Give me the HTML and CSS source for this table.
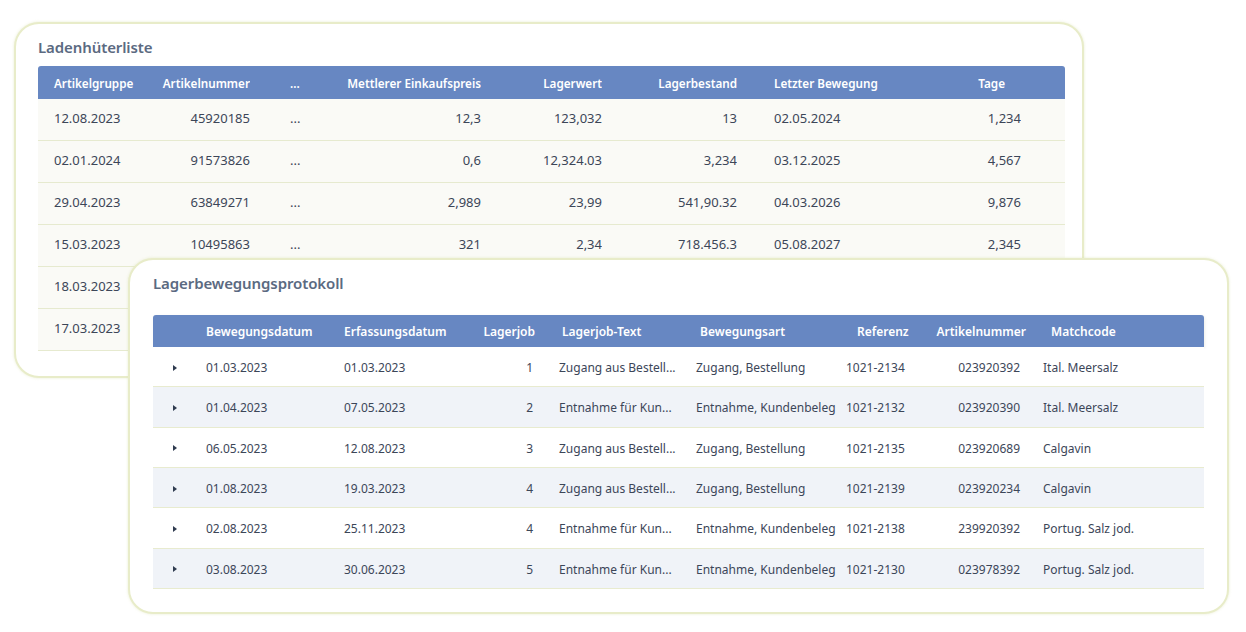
FILE: index.html
```html
<!DOCTYPE html>
<html lang="de">
<head>
<meta charset="utf-8">
<title>Lager</title>
<link rel="stylesheet" href="styles.css">
</head>
<body>
<div class="stage">
  <section class="card card-a">
    <h2 class="title">Ladenhüterliste</h2>
    <div class="tbl tbl-a">
      <div class="row head">
        <div class="c">Artikelgruppe</div>
        <div class="c r">Artikelnummer</div>
        <div class="c dots">...</div>
        <div class="c r">Mettlerer Einkaufspreis</div>
        <div class="c r">Lagerwert</div>
        <div class="c r">Lagerbestand</div>
        <div class="c last">Letzter Bewegung</div>
        <div class="c r tage">Tage</div>
      </div>
      <div class="row">
        <div class="c">12.08.2023</div><div class="c r">45920185</div><div class="c dots">...</div><div class="c r">12,3</div><div class="c r">123,032</div><div class="c r">13</div><div class="c last">02.05.2024</div><div class="c r">1,234</div>
      </div>
      <div class="row">
        <div class="c">02.01.2024</div><div class="c r">91573826</div><div class="c dots">...</div><div class="c r">0,6</div><div class="c r">12,324.03</div><div class="c r">3,234</div><div class="c last">03.12.2025</div><div class="c r">4,567</div>
      </div>
      <div class="row">
        <div class="c">29.04.2023</div><div class="c r">63849271</div><div class="c dots">...</div><div class="c r">2,989</div><div class="c r">23,99</div><div class="c r">541,90.32</div><div class="c last">04.03.2026</div><div class="c r">9,876</div>
      </div>
      <div class="row">
        <div class="c">15.03.2023</div><div class="c r">10495863</div><div class="c dots">...</div><div class="c r">321</div><div class="c r">2,34</div><div class="c r">718.456.3</div><div class="c last">05.08.2027</div><div class="c r">2,345</div>
      </div>
      <div class="row">
        <div class="c">18.03.2023</div><div class="c r"></div><div class="c dots"></div><div class="c r"></div><div class="c r"></div><div class="c r"></div><div class="c last"></div><div class="c r"></div>
      </div>
      <div class="row">
        <div class="c">17.03.2023</div><div class="c r"></div><div class="c dots"></div><div class="c r"></div><div class="c r"></div><div class="c r"></div><div class="c last"></div><div class="c r"></div>
      </div>
    </div>
  </section>

  <section class="card card-b">
    <h2 class="title">Lagerbewegungsprotokoll</h2>
    <div class="tbl tbl-b">
      <div class="row head">
        <div class="c"></div>
        <div class="c">Bewegungsdatum</div>
        <div class="c">Erfassungsdatum</div>
        <div class="c r">Lagerjob</div>
        <div class="c">Lagerjob-Text</div>
        <div class="c">Bewegungsart</div>
        <div class="c">Referenz</div>
        <div class="c r">Artikelnummer</div>
        <div class="c">Matchcode</div>
      </div>
      <div class="row">
        <div class="c"><span class="caret"></span></div><div class="c">01.03.2023</div><div class="c">01.03.2023</div><div class="c r">1</div><div class="c">Zugang aus Bestell...</div><div class="c">Zugang, Bestellung</div><div class="c">1021-2134</div><div class="c r">023920392</div><div class="c">Ital. Meersalz</div>
      </div>
      <div class="row alt">
        <div class="c"><span class="caret"></span></div><div class="c">01.04.2023</div><div class="c">07.05.2023</div><div class="c r">2</div><div class="c">Entnahme für Kun...</div><div class="c">Entnahme, Kundenbeleg</div><div class="c">1021-2132</div><div class="c r">023920390</div><div class="c">Ital. Meersalz</div>
      </div>
      <div class="row">
        <div class="c"><span class="caret"></span></div><div class="c">06.05.2023</div><div class="c">12.08.2023</div><div class="c r">3</div><div class="c">Zugang aus Bestell...</div><div class="c">Zugang, Bestellung</div><div class="c">1021-2135</div><div class="c r">023920689</div><div class="c">Calgavin</div>
      </div>
      <div class="row alt">
        <div class="c"><span class="caret"></span></div><div class="c">01.08.2023</div><div class="c">19.03.2023</div><div class="c r">4</div><div class="c">Zugang aus Bestell...</div><div class="c">Zugang, Bestellung</div><div class="c">1021-2139</div><div class="c r">023920234</div><div class="c">Calgavin</div>
      </div>
      <div class="row">
        <div class="c"><span class="caret"></span></div><div class="c">02.08.2023</div><div class="c">25.11.2023</div><div class="c r">4</div><div class="c">Entnahme für Kun...</div><div class="c">Entnahme, Kundenbeleg</div><div class="c">1021-2138</div><div class="c r">239920392</div><div class="c">Portug. Salz jod.</div>
      </div>
      <div class="row alt">
        <div class="c"><span class="caret"></span></div><div class="c">03.08.2023</div><div class="c">30.06.2023</div><div class="c r">5</div><div class="c">Entnahme für Kun...</div><div class="c">Entnahme, Kundenbeleg</div><div class="c">1021-2130</div><div class="c r">023978392</div><div class="c">Portug. Salz jod.</div>
      </div>
    </div>
  </section>
</div>
</body>
</html>
```

FILE: styles.css
```css
* { box-sizing: border-box; }

html, body {
  margin: 0;
  padding: 0;
  background: #ffffff;
}

body {
  font-family: "Noto Sans", "Open Sans", "DejaVu Sans", sans-serif;
  color: #3c4658;
}

.stage {
  display: grid;
  width: 1246px;
  height: 632px;
}

.card {
  grid-area: 1 / 1;
  background: #ffffff;
  border: 2px solid #e8ecc9;
  border-radius: 25px;
  box-shadow: 0 0 3px rgba(220, 226, 180, 0.6);
  display: flex;
  flex-direction: column;
}

.card-a {
  margin: 22px 0 0 14px;
  width: 1070px;
  height: 356px;
  padding: 12px 17px 0 22px;
}

.card-b {
  margin: 258px 0 0 128px;
  width: 1101px;
  height: 356px;
  padding: 12px 23px 0 23px;
}

.title {
  margin: 0;
  font-size: 15px;
  line-height: 22px;
  font-weight: 600;
  color: #5b6a81;
  letter-spacing: -0.1px;
}

.card-a .title { margin-bottom: 8px; }
.card-b .title { margin-bottom: 21px; }

.tbl .row {
  display: grid;
  align-items: center;
}

.tbl .head {
  background: #6787c2;
  color: #ffffff;
  font-weight: 600;
  border-radius: 3px 3px 0 0;
}

.c {
  white-space: nowrap;
  overflow: hidden;
}

.r { text-align: right; }

/* Table A */
.tbl-a .row {
  grid-template-columns: 112px 100px 80px 151px 121px 135px 213px 71px 44px;
  height: 42px;
  padding-bottom: 3px;
  font-size: 13px;
  background: #fafaf6;
  border-bottom: 1px solid #e6eacf;
}

.tbl-a .head {
  height: 33px;
  padding-bottom: 0;
  font-size: 11.7px;
  background: #6787c2;
  border-bottom: 0;
}

.tbl-a .c:first-child { padding-left: 16px; }
.tbl-a .dots { padding-left: 40px; }
.tbl-a .last { padding-left: 37px; }
.tbl-a .head .tage { padding-right: 16px; }

/* Table B */
.tbl-b .row {
  grid-template-columns: 37px 140px 140px 75px 140px 155px 85px 110px 169px;
  height: 40.33px;
  padding-top: 2px;
  font-size: 12px;
  background: #ffffff;
  border-bottom: 1px solid #e8ebcf;
}

.tbl-b .row.alt { background: #f0f3f8; }

.tbl-b .head {
  height: 32px;
  padding-top: 0;
  font-size: 12px;
  background: #6787c2;
  border-bottom: 0;
  box-shadow: 1px 1px 3px rgba(120, 130, 90, 0.12);
}

.tbl-b .row > .c:nth-child(1) { padding-left: 20px; }
.tbl-b .row > .c:nth-child(2) { padding-left: 16px; }
.tbl-b .row > .c:nth-child(3) { padding-left: 14px; }
.tbl-b .row > .c:nth-child(4) { padding-right: 12px; }
.tbl-b .row > .c:nth-child(5) { padding-left: 14px; }
.tbl-b .row > .c:nth-child(6) { padding-left: 11px; }
.tbl-b .row > .c:nth-child(7) { padding-left: 6px; }
.tbl-b .row > .c:nth-child(8) { padding-right: 15px; }
.tbl-b .row > .c:nth-child(9) { padding-left: 8px; }

.tbl-b .head > .c:nth-child(4) { padding-right: 10px; }
.tbl-b .head > .c:nth-child(5) { padding-left: 17px; }
.tbl-b .head > .c:nth-child(6) { padding-left: 15px; }
.tbl-b .head > .c:nth-child(7) { padding-left: 17px; }
.tbl-b .head > .c:nth-child(8) { padding-right: 9px; }
.tbl-b .head > .c:nth-child(9) { padding-left: 16px; }

.caret {
  display: block;
  width: 0;
  height: 0;
  border-top: 3px solid transparent;
  border-bottom: 3px solid transparent;
  border-left: 4px solid #2f3b4f;
}
```
